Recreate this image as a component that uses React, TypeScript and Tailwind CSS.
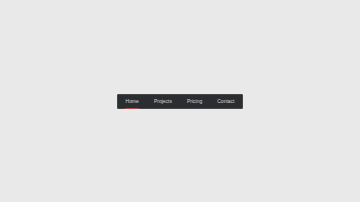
import React from "react";

export default function App() {
  const items = ["Home", "Projects", "Pricing", "Contact"];
  return (
    <div className="w-[360px] h-[202px] bg-[#e9e9e9] flex items-center justify-center" style={{ fontFamily: '"Liberation Sans", Arial, sans-serif' }}>
      <nav className="flex bg-[#2b2d31] border border-[#45474b] rounded-[1px] mt-[1px]">
        {items.map((t, i) => (
          <a key={t} className="relative px-[7.5px] h-[13px] flex items-center text-[5px] leading-none text-[#d4d5d7]">
            {t}
            {i === 0 && <span className="absolute left-[7px] right-[7px] bottom-[-1px] h-[1.5px] bg-[#ee2f36]" />}
          </a>
        ))}
      </nav>
    </div>
  );
}
